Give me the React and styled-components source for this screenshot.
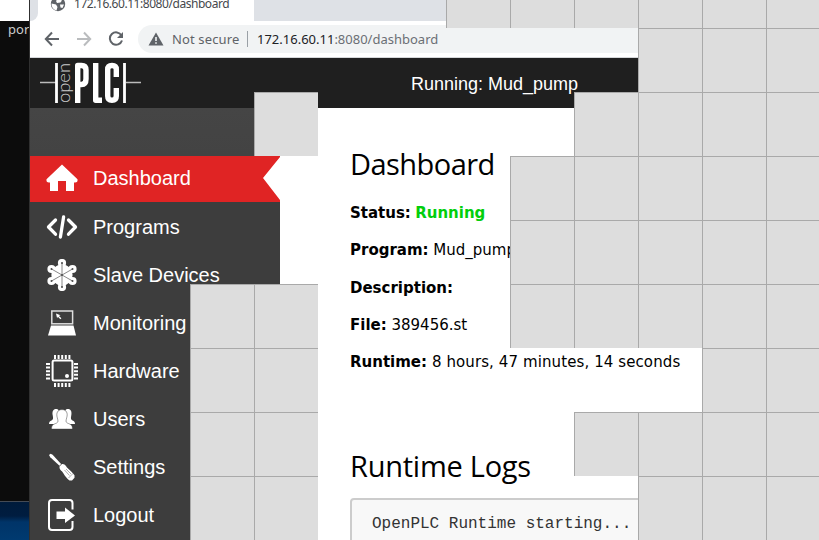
import React from "react";
import styled, { createGlobalStyle, css } from "styled-components";

const Global = createGlobalStyle`
  * { box-sizing: border-box; }
  html, body { margin: 0; overflow: hidden; background: #fff; }
`;

const Screen = styled.div`
  position: relative;
  width: 819px;
  height: 540px;
  overflow: hidden;
  display: flex;
  background: #fff;
`;

const Desktop = styled.div`
  width: 30px;
  flex: none;
  display: flex;
  flex-direction: column;
  border-right: 1px solid #303030;
`;
const DesktopTop = styled.div`
  height: 21px;
  flex: none;
  background: #fff;
`;
const Terminal = styled.div`
  height: 480px;
  flex: none;
  background: #0c0c0c;
  color: #ccc;
  font: 13px/17px "Noto Sans", sans-serif;
  padding-left: 8px;
  overflow: hidden;
  white-space: nowrap;
  letter-spacing: 0.1px;
`;
const Wallpaper = styled.div`
  height: 39px;
  flex: none;
  border-top: 1px solid #454b55;
  background: linear-gradient(#001b3b 0, #001d40 14px, #003468 20px, #003a70 100%);
`;

const Browser = styled.div`
  flex: 1;
  min-width: 0;
  display: flex;
  flex-direction: column;
`;
const TabBar = styled.div`
  height: 21px;
  flex: none;
  display: flex;
  background: #dee1e6;
`;
const TabStart = styled.div`
  background: #fff;
`;
const TabEdge = styled.div`
  width: 8px;
  height: 21px;
  background: #dee1e6;
  border-bottom-right-radius: 8px;
`;
const Tab = styled.div`
  width: 216px;
  background: #fff;
  display: flex;
  font: 12px/16px "Noto Sans", sans-serif;
  color: #45484c;
  padding-left: 12px;
  svg { margin-top: -4px; flex: none; }
`;
const TabTitle = styled.span`
  margin: -4px 0 0 8px;
  letter-spacing: -0.45px;
`;
const Toolbar = styled.div`
  height: 37px;
  flex: none;
  display: flex;
  align-items: center;
  padding: 0 0 1px 14px;
  border-bottom: 1px solid #d5d7da;
  background: #fff;
`;
const NavButton = styled.span`
  width: 32px;
  height: 16px;
  display: flex;
  svg { display: block; }
`;
const Address = styled.div`
  flex: 1;
  height: 28px;
  margin-left: -2px;
  display: flex;
  align-items: center;
  padding-left: 10px;
  border-radius: 14px 0 0 14px;
  background: #f1f3f4;
  color: #5f6368;
  white-space: nowrap;
  font: 13px/20px "Noto Sans", sans-serif;
`;
const Security = styled.span`
  margin-left: 8px;
  width: 75px;
  letter-spacing: 0.13px;
`;
const Divider = styled.span`
  width: 1px;
  height: 16px;
  margin-right: 9px;
  background: #9aa0a6;
`;
const Url = styled.span`
  color: #6b6f74;
  b { font-weight: 400; color: #202124; }
`;

const AppHeader = styled.header`
  height: 50px;
  flex: none;
  background: #1f1f1f;
  display: flex;
  align-items: center;
  padding-left: 10px;
  svg { display: block; }
`;
const HeaderTitle = styled.div`
  margin-left: 268px;
  color: #fff;
  font: 18px/22px "Liberation Sans", Arial, sans-serif;
  margin-top: 1px;
`;
const Body = styled.div`
  flex: 1;
  min-height: 0;
  display: flex;
`;
const Sidebar = styled.nav`
  width: 250px;
  flex: none;
  padding-top: 48px;
  background: linear-gradient(#454545 0, #434343 48px, #3d3d3d 49px, #3d3d3d 100%);
`;
const Item = styled.div`
  height: 46px;
  display: flex;
  align-items: center;
  padding-left: 16px;
  color: #fff;
  font: 20px/24px "Liberation Sans", Arial, sans-serif;
  svg { display: block; flex: none; margin: -1px 15px 0 0; }
  ${(p) => p.$active && css`
    background: #e02424;
    clip-path: polygon(0 0, 100% 0, 100% 1px, 233px 22px, 100% 44px, 100% 100%, 0 100%);
  `}
`;
const ItemSlot = styled.div`
  height: 46px;
  margin-bottom: 2px;
  background: ${(p) => (p.$active ? "#fff" : "none")};
`;
const ItemText = styled.span`
  margin-top: ${(p) => (p.$active ? "-2px" : "0")};
`;

const Main = styled.main`
  flex: 1;
  padding: 36px 0 0 70px;
  white-space: nowrap;
  overflow: hidden;
`;
const Heading = styled.h2`
  margin: 0;
  height: 40px;
  font: 400 29px/40px "Open Sans", sans-serif;
  letter-spacing: ${(p) => p.$track};
  color: #000;
`;
const InfoList = styled.section`
  padding-top: 18.9px;
  height: 262px;
`;
const Info = styled.p`
  margin: 0;
  height: 37.4px;
  font: 15px/20px "DejaVu Sans", Verdana, sans-serif;
  letter-spacing: ${(p) => p.$track || "0"};
  color: #000;
  b { letter-spacing: 0; }
`;
const Running = styled.b`
  margin-left: -0.5px;
  color: #02ce0c;
`;
const Log = styled.pre`
  margin: 12px 0 0;
  height: 80px;
  border: 2px solid #ccc;
  border-radius: 4px;
  background: #f8f8f8;
  padding: 14px 20px;
  font: 16px/20px "Liberation Mono", "Courier New", monospace;
  color: #333;
`;

/* Loading tiles lie over the window on a 64px grid. */
const TileLayer = styled.div`
  position: absolute;
  left: -2px;
  top: -36px;
  display: grid;
  grid-template-columns: repeat(13, 64px);
  grid-template-rows: repeat(9, 64px);
`;
const Tile = styled.div`
  grid-column: ${(p) => p.$col + 1};
  grid-row: ${(p) => p.$row + 1};
  border-left: 1px solid #a9a9a9;
  border-top: 1px solid #a9a9a9;
  background: #ddd;
`;

const tileRows = [
  [7, 8, 9, 10, 11, 12],
  [10, 11, 12],
  [4, 9, 10, 11, 12],
  [8, 9, 10, 11, 12],
  [8, 9, 10, 11, 12],
  [3, 4, 8, 9, 10, 11, 12],
  [3, 4, 11, 12],
  [3, 4, 9, 10, 11, 12],
  [3, 4, 10, 11, 12],
];

const Icon = ({ children }) => (
  <svg width="32" height="32" viewBox="0 0 32 32" fill="#fff">{children}</svg>
);

const HomeIcon = () => (
  <Icon><path d="M16 1.5 31.5 16.2Q32 19.5 29 19.5H28V28H20V18H12V28H4V19.5H3Q0 19.5 .5 16.2Z" /></Icon>
);
const CodeIcon = () => (
  <Icon>
    <g fill="none" stroke="#fff" strokeWidth="3.3" strokeLinecap="round" strokeLinejoin="round">
      <path d="M9.5 9 2.5 16l7 7.2M22.5 9 29.5 16l-7 7.2M17.6 6 14.4 26" />
    </g>
  </Icon>
);
const hubs = [[16, 4], [26.5, 10], [26.5, 22], [16, 28], [5.5, 22], [5.5, 10]];
const SlaveIcon = () => (
  <Icon>
    <circle cx="16" cy="16" r="10.6" />
    {hubs.map(([x, y]) => (
      <circle key={`${x}-${y}`} cx={x} cy={y} r="4.1" />
    ))}
    <path d="M16 4v24M5.500 10l21 12M26.500 10l-21 12" stroke="#888" strokeWidth="1" fill="none" />
    <g fill="#4b4b4b">
      {[...hubs, [16, 16]].map(([x, y]) => (
        <circle key={`${x}-${y}`} cx={x} cy={y} r="1" />
      ))}
    </g>
  </Icon>
);
const LaptopIcon = () => (
  <Icon>
    <rect x="5.8" y="4" width="20.8" height="12.8" fill="none" stroke="#dedede" strokeWidth="1.5" />
    <path d="M5 18.5H27.5L30 28.5H2Z" />
    <path d="m10 6.5 4.500 1.700-1.600.7 2.500 2.400-1 .9-2.500-2.400-.8 1.400Z" />
  </Icon>
);
const ChipIcon = () => (
  <Icon>
    <rect x="6.6" y="5.6" width="19.8" height="19.8" rx="1.5" fill="none" stroke="#fff" strokeWidth="2" />
    <circle cx="21" cy="21" r="2" />
    {[8, 11.6, 15.2, 18.8, 22.4].map((v) => (
      <React.Fragment key={v}>
        <path d={`M${v} 0h2v4h-2zM${v} 28h2v4h-2z`} />
        <path d={`M0 ${v}h4v2H0zM28 ${v}h4v2h-4z`} />
      </React.Fragment>
    ))}
  </Icon>
);
const UsersIcon = () => (
  <Icon>
    <path d="M12 6.400C8 5 5.800 7.500 6.700 12.300c.8 3.400.2 4.500-1.200 5.300-1.600.8-2.500 1.400-2.500 3.400h9l2-4-1-9ZM20 6.400c4-1.400 6.200 1.100 5.300 5.900-.8 3.400-.2 4.500 1.200 5.300 1.600.8 2.500 1.400 2.500 3.400h-9l-2-4 1-9Z" />
    <path d="M16 6.600c-4.500 0-6.100 3.600-4.700 8.200.8 3.100 1.300 4.100-.8 5.300-3 1.300-5 1.800-5 6H26.500c0-4.200-2-4.700-5-6-2.100-1.200-1.600-2.200-.8-5.300C22.100 10.200 20.500 6.600 16 6.600Z" stroke="#3d3d3d" strokeWidth=".5" />
  </Icon>
);
const ScrewdriverIcon = () => (
  <Icon>
    <path d="m3 4.100 1.600-1.300 2 1 8.500 9.300-1.600 1.600-9.200-8.500Z" />
    <path d="M13.500 15.500 16 13c1.500-.3 3 .6 4 2 .3 1 1 1.600 2 2.500 2.500 2 4.700 4.300 6.500 6.700v2.500l-2.500 2.800h-2.500c-2.500-2-4.500-4.300-6-7-.6-1.300-1.300-2-2.300-2.800-1.300-1.200-1.900-2.500-1.700-4.200Z" />
    <path d="m22.500 27 4.500-4.500M18.500 19l5 5.500M20 18l5 5" stroke="#777" strokeWidth=".6" />
  </Icon>
);
const LogoutIcon = () => (
  <Icon>
    <path d="M26.500 10.500V4q0-3-3-3H6Q3 1 3 4V28q0 3 3 3H23.500q3 0 3-3V22" fill="none" stroke="#fff" strokeWidth="2" />
    <path d="M10.500 12.500H19V8.500L29 16.500 19 24V20H10.500Z" />
  </Icon>
);

const Logo = () => (
  <svg width="103" height="42" viewBox="0 0 103 42" fill="none">
    <path d="M0 20.500H16M86 20.500H101" stroke="#bbb" strokeWidth="1.700" />
    <path d="M16.500 1V41M84.500 1V41" stroke="#fff" strokeWidth="2.800" />
    <text transform="translate(29.500 41) rotate(-90)" fill="#ccc" fontFamily="Lato, sans-serif" fontWeight="300" fontSize="17" textLength="40" lengthAdjust="spacingAndGlyphs">open</text>
    <g stroke="#fff" strokeWidth="5.400" strokeLinejoin="round">
      <path d="M37.700 41V3.500H41.500Q46 3.500 46 8V17Q46 22.500 41.500 22.500H38" />
      <path d="M55.700 1V38.300H62" />
      <path d="M76.300 15V7.500Q76.300 3.500 72 3.500Q67.700 3.500 67.700 7.500V34Q67.700 38.300 72 38.300Q76.300 38.300 76.300 34V26" />
    </g>
  </svg>
);

const items = [
  ["Dashboard", HomeIcon],
  ["Programs", CodeIcon],
  ["Slave Devices", SlaveIcon],
  ["Monitoring", LaptopIcon],
  ["Hardware", ChipIcon],
  ["Users", UsersIcon],
  ["Settings", ScrewdriverIcon],
  ["Logout", LogoutIcon],
];

export default function App() {
  return (
    <Screen>
      <Global />
      <Desktop>
        <DesktopTop />
        <Terminal>por</Terminal>
        <Wallpaper />
      </Desktop>
      <Browser>
        <TabBar>
          <TabStart><TabEdge /></TabStart>
          <Tab>
            <svg width="16" height="16" viewBox="0 0 16 16">
              <circle cx="8" cy="8" r="7.200" fill="#5f6368" />
              <path d="M1.500 7.500 6 8.500 7.500 11 6.500 14.500C3 13.500 1.500 11 1.500 7.500ZM8 2.500 12 4.500 10.500 6.500 7 7 6 5ZM10 8.500H14L12.500 12 10.500 11.500Z" fill="#fff" />
            </svg>
            <TabTitle>172.16.60.11:8080/dashboard</TabTitle>
          </Tab>
        </TabBar>
        <Toolbar>
          <NavButton>
            <svg width="16" height="16" viewBox="0 0 16 16" fill="none" stroke="#5f6368" strokeWidth="2"><path d="M15 8H2.500M8 1.500 1.800 8 8 14.500" /></svg>
          </NavButton>
          <NavButton>
            <svg width="16" height="16" viewBox="0 0 16 16" fill="none" stroke="#babcbe" strokeWidth="2"><path d="M1 8H13.500M8 1.500 14.200 8 8 14.500" /></svg>
          </NavButton>
          <NavButton>
            <svg width="16" height="16" viewBox="0 0 16 16" fill="none"><path d="M13.500 4.500A6.200 6.200 0 1 0 14 9.500" stroke="#5f6368" strokeWidth="2" /><path d="M15 1V7H9Z" fill="#5f6368" /></svg>
          </NavButton>
          <Address>
            <svg width="16" height="16" viewBox="0 0 16 16"><path d="M8 1.500 15.500 14.500H.5Z" fill="#5f6368" /><path d="M7.200 6h1.600v4H7.200zM7.200 11.200h1.600v1.600H7.200z" fill="#f1f3f4" /></svg>
            <Security>Not secure</Security>
            <Divider />
            <Url><b>172.16.60.11</b>:8080/dashboard</Url>
          </Address>
        </Toolbar>
        <AppHeader>
          <Logo />
          <HeaderTitle>Running: Mud_pump</HeaderTitle>
        </AppHeader>
        <Body>
          <Sidebar>
            {items.map(([label, Glyph], i) => (
              <ItemSlot key={label} $active={i === 0}>
                <Item $active={i === 0}>
                  <Glyph />
                  <ItemText $active={i === 0}>{label}</ItemText>
                </Item>
              </ItemSlot>
            ))}
          </Sidebar>
          <Main>
            <Heading $track="-0.55px">Dashboard</Heading>
            <InfoList>
              <Info><b>Status:</b> <Running>Running</Running></Info>
              <Info><b>Program:</b> Mud_pump</Info>
              <Info><b>Description:</b></Info>
              <Info><b>File:</b> 389456.st</Info>
              <Info $track="0.1px"><b>Runtime:</b> 8 hours, 47 minutes, 14 seconds</Info>
            </InfoList>
            <Heading $track="-0.25px">Runtime Logs</Heading>
            <Log>OpenPLC Runtime starting...</Log>
          </Main>
        </Body>
      </Browser>
      <TileLayer>
        {tileRows.flatMap((cols, row) =>
          cols.map((col) => <Tile key={`${row}-${col}`} $row={row} $col={col} />)
        )}
      </TileLayer>
    </Screen>
  );
}
